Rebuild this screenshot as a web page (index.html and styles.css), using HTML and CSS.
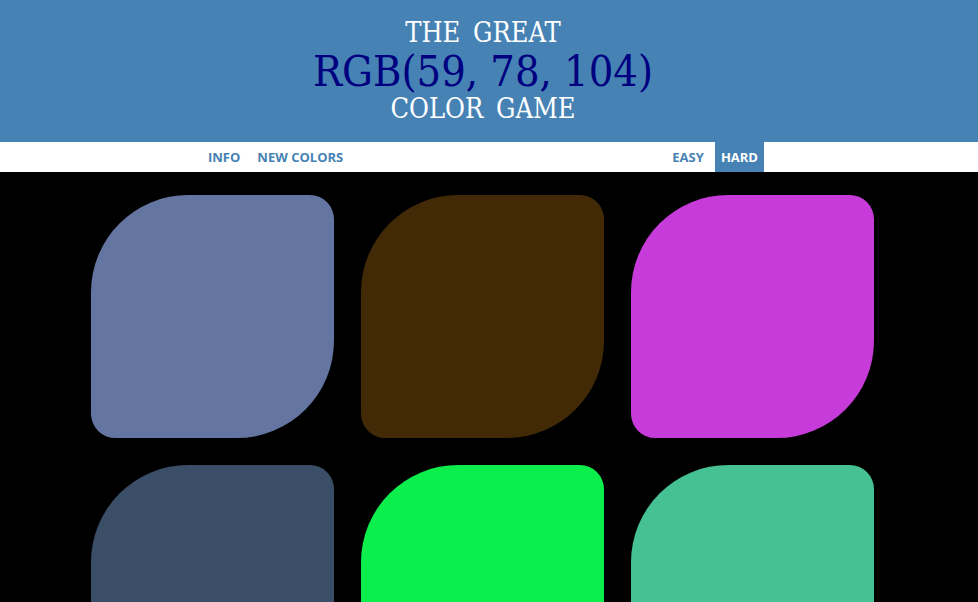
FILE: index.html
```html
<!DOCTYPE html>
<html>
<head>
<meta charset="utf-8">
<link rel="stylesheet" href="styles.css">
</head>
<body>
<header class="header">
  <h1 class="title">
    <span class="title-line">THE GREAT</span>
    <span class="title-rgb">RGB(59, 78, 104)</span>
    <span class="title-line">COLOR GAME</span>
  </h1>
</header>
<nav class="nav">
  <div class="nav-inner">
    <div class="nav-group">
      <button class="nav-btn">INFO</button>
      <button class="nav-btn">NEW COLORS</button>
    </div>
    <div class="nav-group">
      <button class="nav-btn">EASY</button>
      <button class="nav-btn selected">HARD</button>
    </div>
  </div>
</nav>
<main class="board">
  <div class="square" style="background: rgb(100, 117, 161);"></div>
  <div class="square" style="background: rgb(66, 42, 7);"></div>
  <div class="square" style="background: rgb(198, 59, 217);"></div>
  <div class="square" style="background: rgb(59, 78, 104);"></div>
  <div class="square" style="background: rgb(11, 238, 75);"></div>
  <div class="square" style="background: rgb(69, 193, 147);"></div>
</main>
</body>
</html>
```

FILE: styles.css
```css
html, body {
  margin: 0;
  padding: 0;
  background: #000;
  overflow: hidden;
}

.header {
  background: #4682b4;
  height: 142px;
  box-sizing: border-box;
  padding: 15px 12px 0 0;
  text-align: center;
}

.title {
  margin: 0;
  font-family: "DejaVu Serif Condensed", "DejaVu Serif", serif;
  font-stretch: condensed;
  font-weight: normal;
  color: #fff;
}

.title-line {
  display: block;
  font-size: 27px;
  line-height: 36px;
  word-spacing: 5px;
}

.title-rgb {
  display: block;
  font-size: 43px;
  line-height: 40px;
  color: #000080;
}

.nav {
  background: #fff;
  height: 30px;
}

.nav-inner {
  width: 562px;
  margin-left: 202px;
  height: 100%;
  display: flex;
  justify-content: space-between;
}

.nav-group {
  display: flex;
  gap: 5px;
  height: 100%;
}

.nav-btn {
  border: none;
  background: #fff;
  color: #4682b4;
  font-family: "Open Sans", sans-serif;
  font-weight: 700;
  font-size: 13px;
  padding: 0 6px;
  height: 100%;
  margin: 0;
  cursor: pointer;
}

.nav-btn.selected {
  background: #4682b4;
  color: #fff;
}

.board {
  width: 782px;
  margin: 23px 0 0 91px;
  display: grid;
  grid-template-columns: repeat(3, 243px);
  gap: 27px;
}

.square {
  width: 243px;
  height: 243px;
  border-radius: 40% 10%;
}
```
